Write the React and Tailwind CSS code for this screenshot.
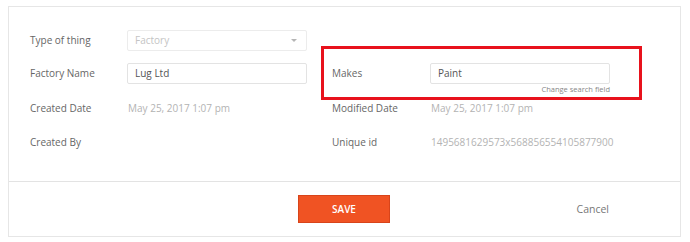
export default function App() {
  const font = { fontFamily: '"Open Sans", "Liberation Sans", sans-serif' };
  return (
    <div className="w-[690px] h-[242px] bg-white relative overflow-hidden" style={font}>
      <div className="absolute left-[8px] top-[6px] w-[673px] h-[231px] border border-[#e6e6e6] bg-white flex flex-col">
        <div className="relative pl-[21px] pt-[17px] h-[174px]">
          <div className="grid grid-cols-[97px_180px_25px_98px_180px] text-[10px]">
            <Row h="h-[32px]">
              <Label>Type of thing</Label>
              <div className="h-[21px] border border-[#ececec] rounded-[2px] flex items-center justify-between pl-[7px] pr-[9px] text-[#c4c4c4]">
                <span>Factory</span>
                <span className="w-0 h-0 border-l-[3px] border-r-[3px] border-t-[3px] border-l-transparent border-r-transparent border-t-[#b5b5b5]" />
              </div>
              <div />
              <div />
              <div />
            </Row>
            <Row h="h-[34px]">
              <Label>Factory Name</Label>
              <Input value="Lug Ltd" />
              <div />
              <Label>Makes</Label>
              <div className="relative">
                <Input value="Paint" />
                <div className="absolute right-0 top-[21px] text-[7.5px] leading-[10px] text-[#888]">Change search field</div>
              </div>
            </Row>
            <Row h="h-[36px]">
              <Label>Created Date</Label>
              <Value>May 25, 2017 1:07 pm</Value>
              <div />
              <Label>Modified Date</Label>
              <Value>May 25, 2017 1:07 pm</Value>
            </Row>
            <Row h="h-[32px]">
              <Label>Created By</Label>
              <div />
              <div />
              <Label>Unique id</Label>
              <Value>1495681629573x568856554105877900</Value>
            </Row>
          </div>
          <div className="absolute left-[312px] top-[39px] w-[321px] h-[54px] border-[3px] border-[#e8121c]" />
        </div>
        <div className="border-t border-[#e3e3e3] flex-1 flex items-center pl-[289px] pr-[71px]">
          <button className="w-[92px] h-[28px] bg-[#f05323] border border-[#d8441a] text-white text-[10px] font-semibold">
            SAVE
          </button>
          <span className="ml-auto text-[10.5px] text-[#777] mt-[2px]">Cancel</span>
        </div>
      </div>
    </div>
  );
}

function Row({ children, h }) {
  return (
    <div className="contents">
      {children.map((c, i) => (
        <div key={i} className={`${h} flex flex-col justify-center`}>
          {c}
        </div>
      ))}
    </div>
  );
}

function Label({ children }) {
  return <div className="text-[#666]">{children}</div>;
}

function Value({ children }) {
  return <div className="text-[#b3b3b3] pl-[1px]">{children}</div>;
}

function Input({ value }) {
  return (
    <div className="h-[21px] border border-[#e3e3e3] rounded-[2px] flex items-center pl-[7px] text-[#555]">
      {value}
    </div>
  );
}
